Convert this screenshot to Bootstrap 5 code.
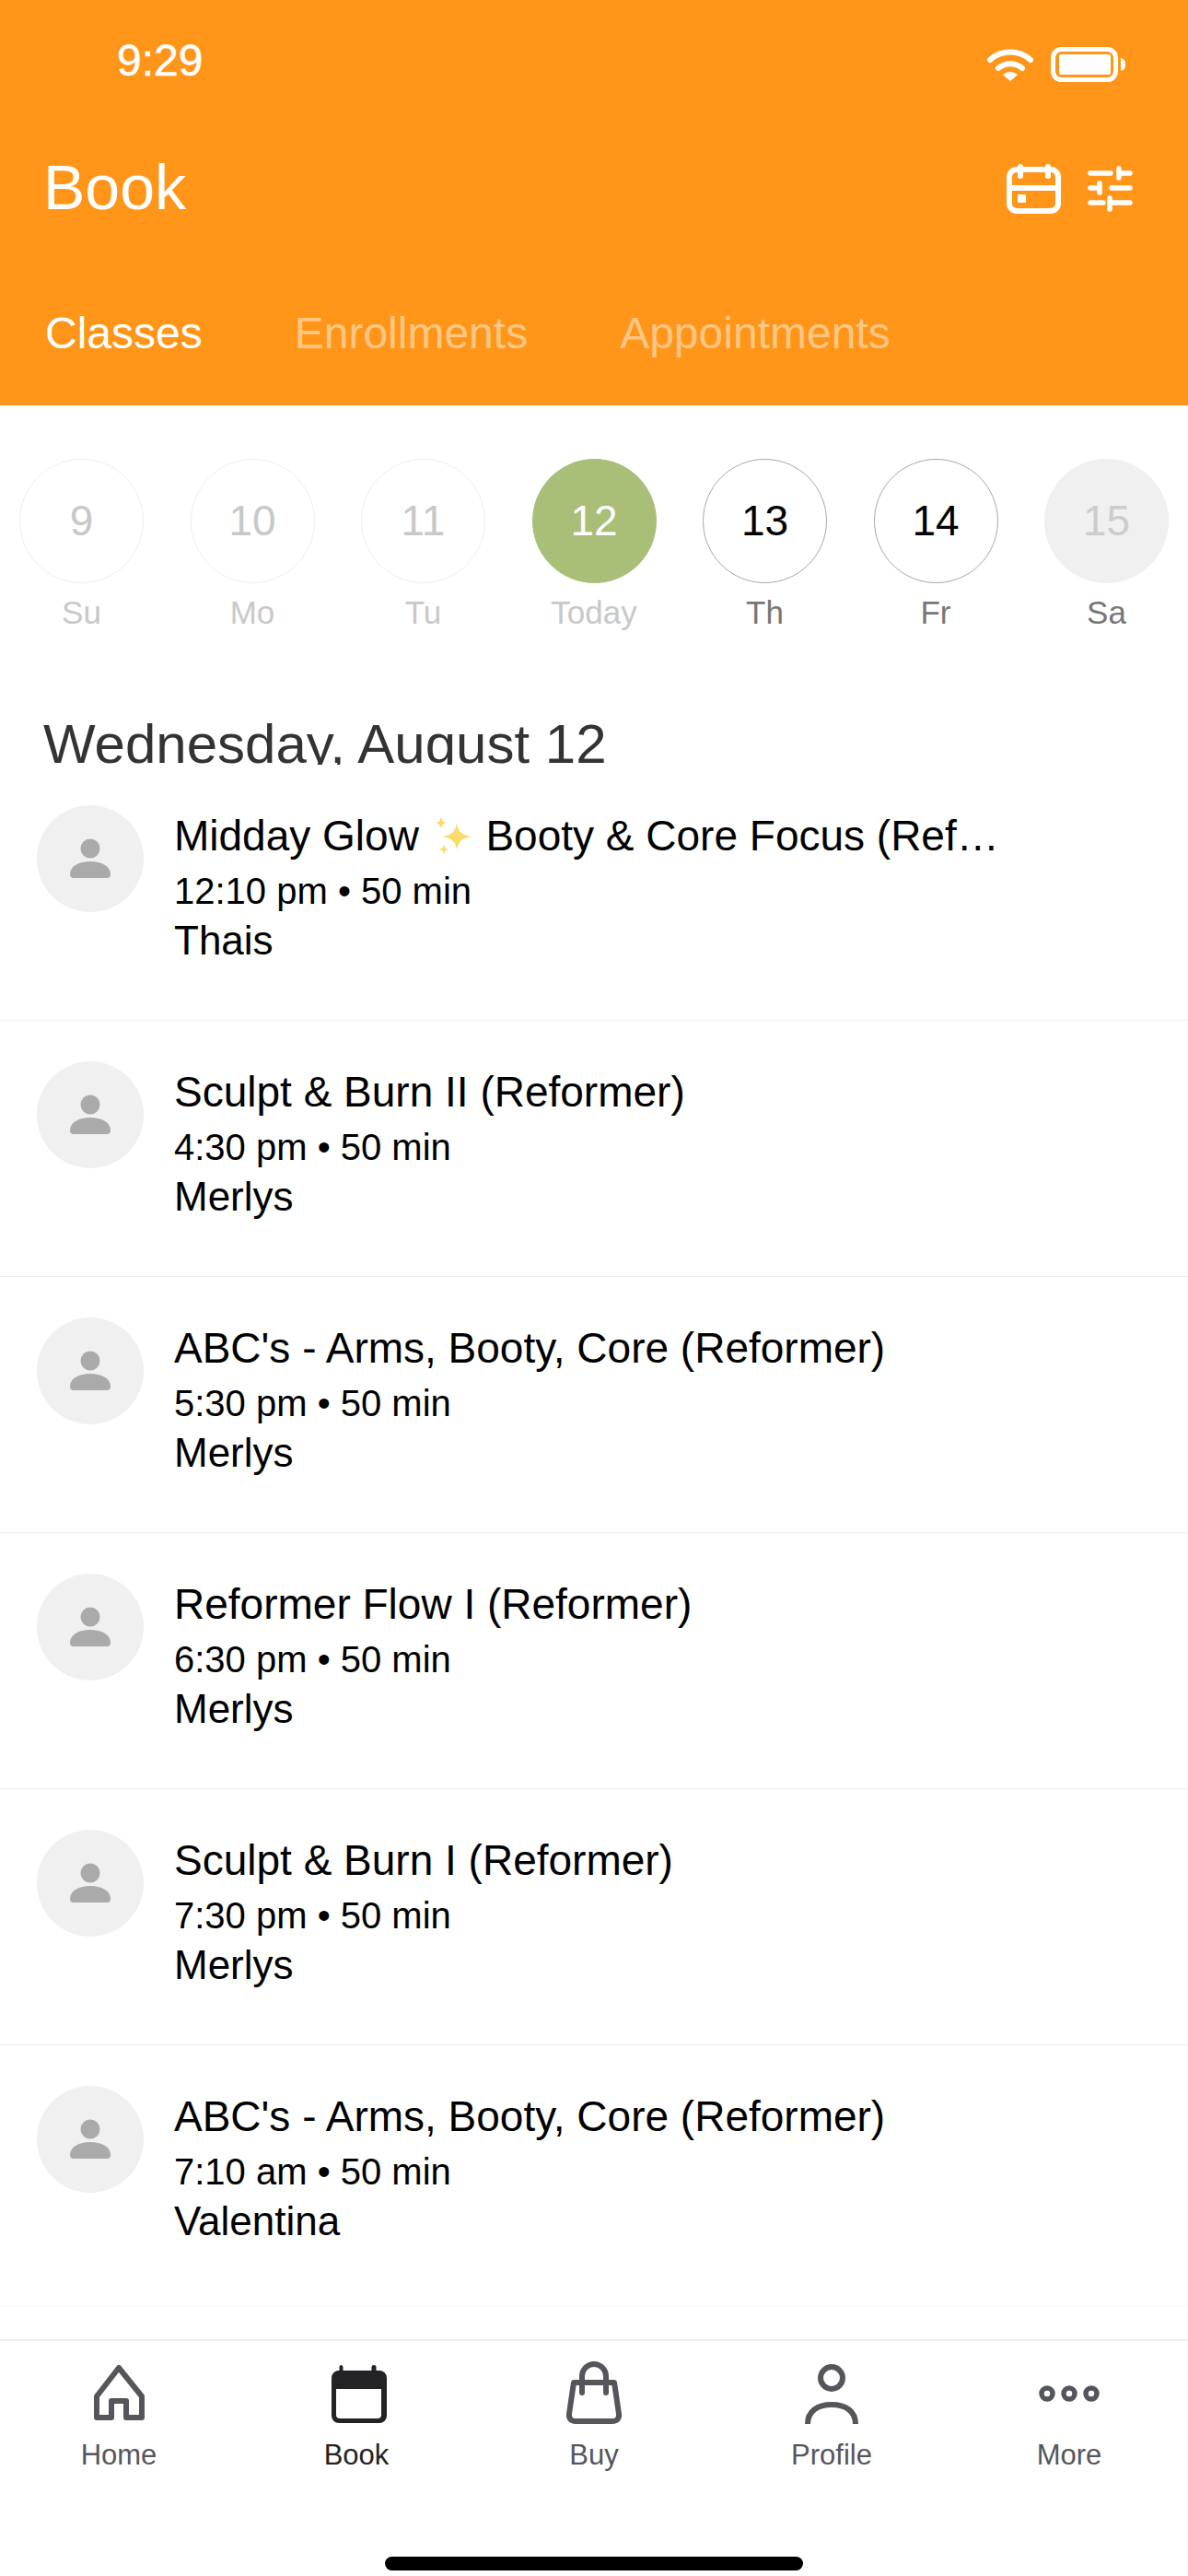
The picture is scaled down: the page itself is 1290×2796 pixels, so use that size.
<!DOCTYPE html>
<html lang="en">
  <head>
    <meta charset="UTF-8" />
    <meta name="viewport" content="width=device-width, initial-scale=1.0" />
    <title>Book</title>
    <link
      href="https://cdn.jsdelivr.net/npm/bootstrap@5.3.2/dist/css/bootstrap.min.css"
      rel="stylesheet"
    />
    <style>
      body {
        width: 1290px;
        height: 2796px;
        overflow: hidden;
        font-family: "Liberation Sans", Arial, sans-serif;
        background: #fff;
      }
      .screen {
        height: 2796px;
      }
      .book-header {
        background: #ff9619;
        color: #fff;
        height: 440px;
        flex: none;
      }
      .status-bar {
        height: 132px;
        padding: 0 68px 0 127px;
      }
      .status-time {
        font-size: 48px;
        line-height: 136px;
        -webkit-text-stroke: 0.5px #fff;
      }
      .status-icons {
        margin-top: 8px;
      }
      .title-row {
        height: 142px;
        padding: 0 60px 0 47px;
      }
      .title-text {
        font-size: 68px;
        line-height: 1;
      }
      .title-icons {
        gap: 27px;
        padding-top: 3px;
      }
      .tab-row {
        padding: 60px 0 0 49px;
        gap: 100px;
      }
      .tab-row .nav-link {
        padding: 0;
        font-size: 48px;
        line-height: 56px;
        color: rgba(255, 255, 255, 0.48);
      }
      .tab-row .nav-link.active {
        color: #fff;
      }
      .day-strip {
        padding: 58px 21px 0;
        flex: none;
      }
      .day-item {
        width: 135px;
      }
      .day-circle {
        width: 135px;
        height: 135px;
        font-size: 46px;
        border: 1px solid #eee;
        color: #c8c8c8;
      }
      .day-label {
        font-size: 35px;
        line-height: 42px;
        margin-top: 11px;
        color: #c8c8c8;
      }
      .day-now .day-circle {
        background: #a9bf78;
        border-color: #a9bf78;
        color: #fff;
      }
      .day-open .day-circle {
        border-color: #a8a8a8;
        color: #000;
      }
      .day-open .day-label,
      .day-closed .day-label {
        color: #777;
      }
      .day-closed .day-circle {
        background: #f0f0f0;
        border-color: #f0f0f0;
        color: #ccc;
      }
      .date-heading {
        flex: none;
        height: 62px;
        margin-top: 82px;
        padding-left: 47px;
        overflow: hidden;
        font-size: 60px;
        line-height: 80px;
        color: #333;
      }
      .class-list {
        flex: 1 1 auto;
        overflow: hidden;
      }
      .class-row.list-group-item {
        height: 278px;
        padding: 44px 0 0 40px;
        border-color: #eee;
        border-width: 0 0 1px;
        gap: 33px;
        color: #000;
      }
      .class-thumb {
        width: 116px;
        height: 116px;
        background: #f0f0f0;
        flex: none;
      }
      .class-info {
        width: 903px;
        padding-top: 5px;
      }
      .class-name {
        font-size: 46px;
        line-height: 56px;
      }
      .class-time {
        font-size: 40px;
        line-height: 54px;
        margin-top: 5px;
      }
      .class-staff {
        font-size: 44px;
        line-height: 54px;
      }
      .spark-icon {
        width: 47px;
        height: 42px;
        vertical-align: -5px;
      }
      .list-tail {
        margin-top: 4px;
        border-top: 1px solid #f6f6f6;
      }
      .bottom-tabs {
        flex: none;
        height: 257px;
        border-top: 2px solid #eee;
        padding-top: 23px;
      }
      .tab-icon {
        display: block;
        width: 68px;
        height: 68px;
        margin: 0 auto;
        overflow: visible;
      }
      .tab-label {
        font-size: 31px;
        line-height: 36px;
        margin-top: 15px;
        color: #55565c;
      }
      .tab-on .tab-label {
        color: #232326;
      }
      .home-bar {
        width: 454px;
        height: 15px;
        background: #000;
        margin: 92px auto 0;
        border-radius: 8px;
      }
    </style>
  </head>
  <body>
    <div class="screen d-flex flex-column">
      <!-- Orange header -->
      <header class="book-header">
        <div class="status-bar d-flex justify-content-between align-items-center">
          <span class="status-time">9:29</span>
          <svg class="status-icons" width="150" height="38" viewBox="0 0 150 38">
            <path d="M3 14a33 33 0 0 1 44 0" fill="none" stroke="#fff" stroke-width="6" stroke-linecap="round" />
            <path d="M12 23a20 20 0 0 1 26 0" fill="none" stroke="#fff" stroke-width="6" stroke-linecap="round" />
            <path d="M17 30a12 12 0 0 1 16 0l-8 7z" fill="#fff" />
            <rect x="71.500" y="2.500" width="68" height="33" rx="9" fill="none" stroke="#fff" stroke-width="5" />
            <rect x="78" y="8" width="56" height="22" rx="2" fill="#fff" />
            <path d="M145 12c4 1 5 4 5 7s-1 6-5 7z" fill="#fff" />
          </svg>
        </div>
        <div class="title-row d-flex justify-content-between align-items-center">
          <span class="title-text">Book</span>
          <div class="title-icons d-flex align-items-center">
            <svg width="60" height="54" viewBox="0 0 60 54" fill="none" stroke="#fff" stroke-width="6" stroke-linecap="round">
              <rect x="3" y="6" width="53" height="45" rx="8" />
              <path d="M3 26h53M15 3v10M45 3v10" />
              <rect x="12" y="33" width="9" height="9" rx="1" fill="#fff" stroke="none" />
            </svg>
            <svg width="50" height="50" viewBox="0 0 50 50" fill="none" stroke="#fff" stroke-width="5.500" stroke-linecap="round">
              <path d="M4 8h22M35 8h12M35 3v10M4 24h10M14 19v10M27 24h20M4 40h14M25 40h22M25 35v12" />
            </svg>
          </div>
        </div>
        <nav class="nav tab-row">
          <a class="nav-link active" href="#">Classes</a>
          <a class="nav-link" href="#">Enrollments</a>
          <a class="nav-link" href="#">Appointments</a>
        </nav>
      </header>

      <!-- Week strip -->
      <div class="day-strip d-flex justify-content-between" id="dayStrip"></div>

      <div class="date-heading">Wednesday, August 12</div>

      <!-- Classes -->
      <div class="class-list">
        <div class="list-group list-group-flush rounded-0" id="classList"></div>
        <div class="list-tail"></div>
      </div>

      <!-- Tab bar -->
      <footer class="bottom-tabs">
        <div class="row g-0 text-center">
          <div class="col">
            <svg class="tab-icon" viewBox="0 0 68 68" fill="none" stroke="#55565c" stroke-width="6" stroke-linejoin="round">
              <path d="M34 6 10 37v23h16V42h16v18h17V37z" />
            </svg>
            <div class="tab-label">Home</div>
          </div>
          <div class="col tab-on">
            <svg class="tab-icon" viewBox="0 0 68 68">
              <path fill="#232326" d="M17 3a2.500 2.500 0 0 1 2.500 2.500V9h31V5.500a2.500 2.500 0 0 1 5 0V9H59a8 8 0 0 1 8 8v41a8 8 0 0 1-8 8H15a8 8 0 0 1-8-8V17a8 8 0 0 1 8-8h.5V5.500A2.500 2.500 0 0 1 17 3z" />
              <path fill="#fff" d="M12 29h49v28a4 4 0 0 1-4 4H16a4 4 0 0 1-4-4z" />
            </svg>
            <div class="tab-label">Book</div>
          </div>
          <div class="col">
            <svg class="tab-icon" viewBox="0 0 68 68" fill="none" stroke="#55565c" stroke-width="6" stroke-linecap="round" stroke-linejoin="round">
              <path d="M12 22h44l5 34c.6 5-2 8-7 8H14c-5 0-7.600-3-7-8z" />
              <path d="M21 33V15a13 13 0 0 1 26 0v18" />
            </svg>
            <div class="tab-label">Buy</div>
          </div>
          <div class="col">
            <svg class="tab-icon" viewBox="0 0 68 68" fill="none" stroke="#55565c" stroke-width="6">
              <circle cx="34" cy="17" r="12" />
              <path d="M8 67c0-14 11-21 26-21s26 7 26 21" />
            </svg>
            <div class="tab-label">Profile</div>
          </div>
          <div class="col">
            <svg class="tab-icon" viewBox="0 0 68 68" fill="none" stroke="#55565c" stroke-width="5.500">
              <circle cx="10" cy="34" r="6" />
              <circle cx="34" cy="34" r="6" />
              <circle cx="58" cy="34" r="6" />
            </svg>
            <div class="tab-label">More</div>
          </div>
        </div>
        <div class="home-bar"></div>
      </footer>
    </div>

    <script src="https://cdn.jsdelivr.net/npm/bootstrap@5.3.2/dist/js/bootstrap.bundle.min.js"></script>
    <script>
      const days = [
        ["9", "Su", ""],
        ["10", "Mo", ""],
        ["11", "Tu", ""],
        ["12", "Today", "day-now"],
        ["13", "Th", "day-open"],
        ["14", "Fr", "day-open"],
        ["15", "Sa", "day-closed"],
      ];
      const spark = `<svg class="spark-icon" viewBox="-2 0 47 42" fill="#fbdc6a">
        <path d="M26 8c2 9 5 12 16 14-11 2-14 5-16 14-2-9-5-12-16-14 11-2 14-5 16-14z" />
        <path d="M9 0c1 5 2 6 6 7-4 1-5 2-6 7-1-5-2-6-6-7 4-1 5-2 6-7z" />
        <path d="M12 30c.6 4 1.500 5 5 6-3.500 1-4.400 2-5 6-.6-4-1.500-5-5-6 3.500-1 4.400-2 5-6z" />
      </svg>`;
      const classes = [
        [`Midday Glow ${spark} Booty &amp; Core Focus (Reformer)`, "12:10 pm", "Thais"],
        ["Sculpt &amp; Burn II (Reformer)", "4:30 pm", "Merlys"],
        ["ABC's - Arms, Booty, Core (Reformer)", "5:30 pm", "Merlys"],
        ["Reformer Flow I (Reformer)", "6:30 pm", "Merlys"],
        ["Sculpt &amp; Burn I (Reformer)", "7:30 pm", "Merlys"],
        ["ABC's - Arms, Booty, Core (Reformer)", "7:10 am", "Valentina"],
      ];

      document.getElementById("dayStrip").innerHTML = days
        .map(
          (d) => `
          <div class="day-item text-center ${d[2]}">
            <div class="day-circle rounded-circle d-flex align-items-center justify-content-center">${d[0]}</div>
            <div class="day-label">${d[1]}</div>
          </div>`
        )
        .join("");

      document.getElementById("classList").innerHTML = classes
        .map(
          (c) => `
          <div class="list-group-item class-row d-flex">
            <div class="class-thumb rounded-circle">
              <svg width="116" height="116" viewBox="0 0 116 116" fill="#aaa">
                <circle cx="58" cy="47" r="10.500" />
                <path d="M40 79h36a4 4 0 0 0 4-4c0-9-10-14-22-14s-22 5-22 14a4 4 0 0 0 4 4z" />
              </svg>
            </div>
            <div class="class-info">
              <div class="class-name text-truncate">${c[0]}</div>
              <div class="class-time">${c[1]} • 50 min</div>
              <div class="class-staff">${c[2]}</div>
            </div>
          </div>`
        )
        .join("");
    </script>
  </body>
</html>
